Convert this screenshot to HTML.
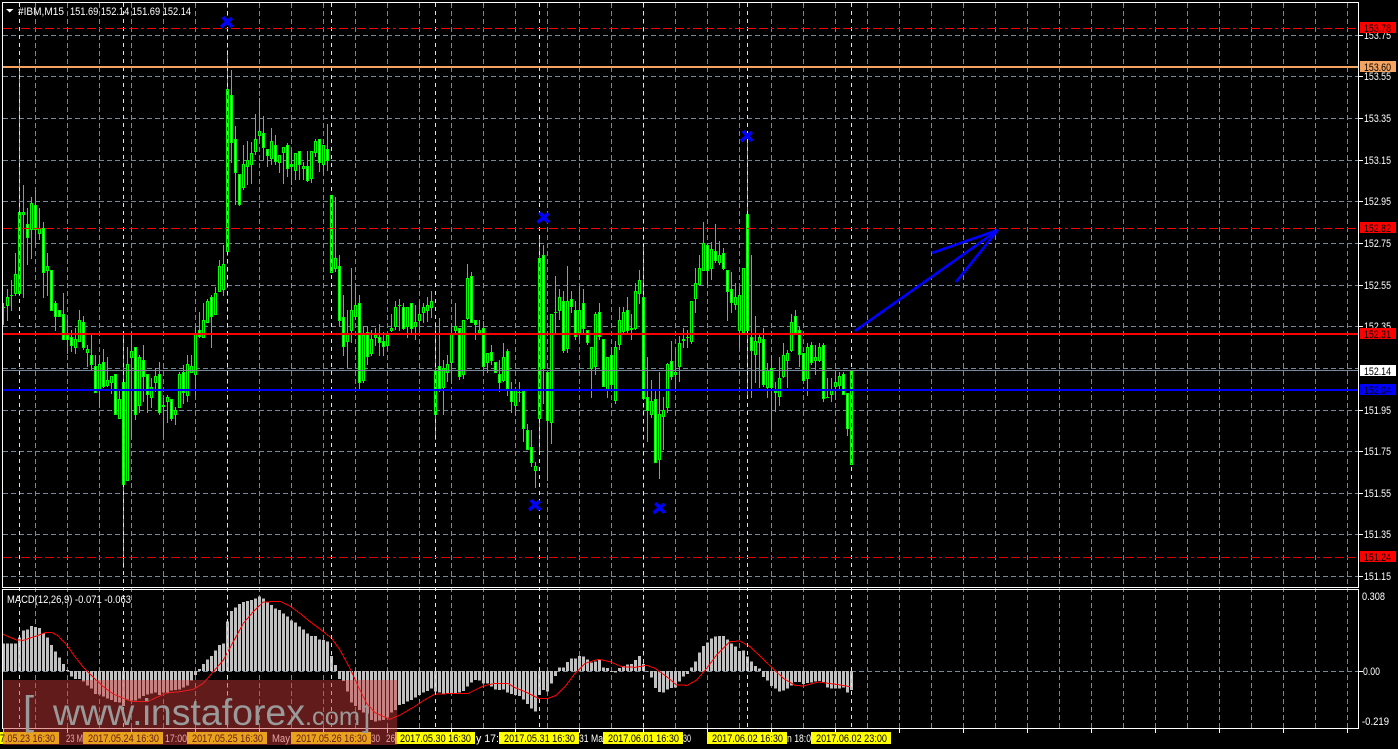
<!DOCTYPE html>
<html lang="en">
<head>
<meta charset="utf-8">
<title>#IBM,M15</title>
<style>
html,body{margin:0;padding:0;background:#000;width:1398px;height:749px;overflow:hidden}
svg{display:block;position:absolute;left:0;top:0}
text{font-family:"Liberation Sans",sans-serif;font-size:11px;fill:#fff}
.k{fill:#000}
</style>
</head>
<body>
<svg width="1398" height="749" viewBox="0 0 1398 749" xmlns="http://www.w3.org/2000/svg">
<rect width="1398" height="749" fill="#000"/>
<g shape-rendering="crispEdges" fill="none">
<!-- grid -->
<path stroke="#778899" stroke-dasharray="5 3" d="M35.5 3V728M67.5 3V728M99.5 3V728M131.5 3V728M163.5 3V728M195.5 3V728M227.5 3V728M259.5 3V728M291.5 3V728M323.5 3V728M355.5 3V728M387.5 3V728M419.5 3V728M451.5 3V728M483.5 3V728M515.5 3V728M547.5 3V728M579.5 3V728M611.5 3V728M643.5 3V728M675.5 3V728M707.5 3V728M739.5 3V728M771.5 3V728M803.5 3V728M835.5 3V728M867.5 3V728M899.5 3V728M931.5 3V728M963.5 3V728M995.5 3V728M1027.5 3V728M1059.5 3V728M1091.5 3V728M1123.5 3V728M1155.5 3V728M1187.5 3V728M1219.5 3V728M1251.5 3V728M1283.5 3V728M1315.5 3V728M1347.5 3V728"/>
<path stroke="#778899" stroke-dasharray="5 3" d="M3 35.5H1358M3 76.5H1358M3 118.5H1358M3 160.5H1358M3 201.5H1358M3 243.5H1358M3 285.5H1358M3 326.5H1358M3 368.5H1358M3 410.5H1358M3 451.5H1358M3 493.5H1358M3 534.5H1358M3 576.5H1358M3 671.5H1358"/>
<!-- MACD histogram -->
<path stroke="#c0c0c0" stroke-width="3" transform="translate(0,580) scale(1,.33333)" d="M3.5 273V190M7.5 273V190M11.5 273V190M15.5 273V190M19.5 273V172M23.5 273V152M27.5 273V148M31.5 273V138M35.5 273V141M39.5 273V144M43.5 273V160M47.5 273V172M51.5 273V195M55.5 273V214M59.5 273V232M63.5 273V252M67.5 273V270M71.5 273V289M75.5 273V297M79.5 273V297M83.5 273V305M87.5 273V316M91.5 273V326M95.5 273V342M99.5 273V344M103.5 273V350M107.5 273V355M111.5 273V360M115.5 273V366M119.5 273V368M123.5 273V378M127.5 273V358M131.5 273V362M135.5 273V362M139.5 273V355M143.5 273V348M147.5 273V344M151.5 273V340M155.5 273V338M159.5 273V345M163.5 273V338M167.5 273V340M171.5 273V332M175.5 273V330M179.5 273V328M183.5 273V322M187.5 273V316M191.5 273V302M195.5 273V285M199.5 273V267M203.5 273V252M207.5 273V238M211.5 273V228M215.5 273V212M219.5 273V195M223.5 273V190M227.5 273V125M231.5 273V93M235.5 273V82M239.5 273V72M243.5 273V66M247.5 273V63M251.5 273V60M255.5 273V55M259.5 273V50M263.5 273V55M267.5 273V68M271.5 273V75M275.5 273V85M279.5 273V90M283.5 273V100M287.5 273V110M291.5 273V122M295.5 273V128M299.5 273V140M303.5 273V148M307.5 273V160M311.5 273V168M315.5 273V168M319.5 273V178M323.5 273V180M327.5 273V185M331.5 273V228M335.5 273V255M339.5 273V297M343.5 273V303M347.5 273V335M351.5 273V368M355.5 273V378M359.5 273V390M363.5 273V398M367.5 273V400M371.5 273V420M375.5 273V424M379.5 273V422M383.5 273V420M387.5 273V412M391.5 273V398M395.5 273V390M399.5 273V375M403.5 273V372M407.5 273V365M411.5 273V360M415.5 273V352M419.5 273V345M423.5 273V338M427.5 273V333M431.5 273V325M435.5 273V335M439.5 273V338M443.5 273V340M447.5 273V342M451.5 273V340M455.5 273V340M459.5 273V338M463.5 273V333M467.5 273V320M471.5 273V308M475.5 273V300M479.5 273V302M483.5 273V310M487.5 273V310M491.5 273V320M495.5 273V328M499.5 273V330M503.5 273V328M507.5 273V338M511.5 273V342M515.5 273V345M519.5 273V348M523.5 273V358M527.5 273V372M531.5 273V385M535.5 273V395M539.5 273V345M543.5 273V330M547.5 273V335M551.5 273V310M555.5 273V288M559.5 273V262M563.5 273V262M567.5 273V246M571.5 273V235M575.5 273V236M579.5 273V228M583.5 273V230M587.5 273V238M591.5 273V248M595.5 273V244M599.5 273V240M603.5 273V262M607.5 273V264M611.5 273V276M615.5 273V278M619.5 273V264M623.5 273V258M627.5 273V254M631.5 273V252M635.5 273V240M639.5 273V228M643.5 273V252M647.5 273V275M651.5 273V293M655.5 273V324M659.5 273V336M663.5 273V338M667.5 273V328M671.5 273V324M675.5 273V322M679.5 273V305M683.5 273V290M687.5 273V282M691.5 273V262M695.5 273V245M699.5 273V218M703.5 273V198M707.5 273V188M711.5 273V175M715.5 273V170M719.5 273V168M723.5 273V168M727.5 273V178M731.5 273V190M735.5 273V200M739.5 273V213M743.5 273V212M747.5 273V230M751.5 273V245M755.5 273V258M759.5 273V266M763.5 273V291M767.5 273V302M771.5 273V318M775.5 273V325M779.5 273V335M783.5 273V332M787.5 273V326M791.5 273V316M795.5 273V306M799.5 273V306M803.5 273V312M807.5 273V309M811.5 273V307M815.5 273V305M819.5 273V303M823.5 273V306M827.5 273V322M831.5 273V326M835.5 273V326M839.5 273V326M843.5 273V322M847.5 273V338M851.5 273V330"/>
</g>
<!-- MACD signal -->
<g fill="none" stroke="#ff0000" stroke-width="3" shape-rendering="crispEdges">
<polyline transform="translate(0,580) scale(.33333)" points="8,162 30,172 50,180 70,181 90,174 110,168 135,158 155,157 175,168 200,195 225,230 250,262 280,292 310,320 340,342 370,355 395,364 445,364 470,352 500,339 540,335 580,328 610,310 640,275 670,240 700,185 730,130 760,95 790,66 840,64 870,78 900,100 930,125 970,155 995,175 1020,210 1050,265 1075,320 1100,370 1125,398 1170,418 1200,405 1240,382 1270,362 1305,342 1350,341"/>
<polyline transform="translate(450,580) scale(.33333)" points="0,341 55,340 75,330 100,318 130,311 175,311 195,323 225,335 265,355 295,355 320,345 345,320 375,280 405,250 445,238 480,245 515,260 555,262 590,256 615,265 650,290 680,315 712,316 740,300 770,265 800,225 840,185 870,183 900,200 930,228 965,262 1000,295 1035,316 1060,318 1105,306 1135,310 1165,314 1200,320"/>
</g>
<g shape-rendering="crispEdges" fill="none">
<!-- wicks -->
<path stroke="#00ff00" d="M3.5 303V325M7.5 289V321M11.5 280V311M15.5 253V296M19.5 60V296M23.5 185V298M27.5 208V265M31.5 197V259M35.5 190V246M39.5 208V240M43.5 222V298M47.5 253V296M51.5 270V311M55.5 301V331M59.5 310V317M63.5 293V340M67.5 320V354M71.5 330V352M75.5 328V354M79.5 310V342M83.5 316V350M87.5 345V367M91.5 335V370M95.5 355V393M99.5 355V408M103.5 349V388M107.5 357V387M111.5 376V394M115.5 374V415M119.5 390V419M123.5 333V568M127.5 347V481M131.5 332V438M135.5 347V420M139.5 355V413M143.5 345V402M147.5 374V413M151.5 378V408M155.5 368V392M159.5 362V415M163.5 398V438M167.5 395V423M171.5 399V421M175.5 407V425M179.5 372V408M183.5 365V404M187.5 355V402M191.5 355V373M195.5 326V396M199.5 312V338M203.5 303V338M207.5 299V323M211.5 295V348M215.5 287V315M219.5 260V292M223.5 245V296M227.5 50V252M231.5 70V163M235.5 126V205M239.5 174V206M243.5 145V190M247.5 141V185M251.5 142V184M255.5 114V155M259.5 98V140M263.5 116V160M267.5 149V167M271.5 128V165M275.5 135V165M279.5 155V173M283.5 147V184M287.5 143V177M291.5 150V185M295.5 153V180M299.5 151V180M303.5 162V180M307.5 151V182M311.5 151V183M315.5 139V157M319.5 139V172M323.5 145V174M327.5 124V171M331.5 195V273M335.5 197V272M339.5 255V327M343.5 295V356M347.5 310V368M351.5 268V343M355.5 285V320M359.5 295V389M363.5 326V383M367.5 326V365M371.5 330V356M375.5 328V346M379.5 324V356M383.5 332V356M387.5 335V350M391.5 314V332M395.5 301V330M399.5 299V331M403.5 303V330M407.5 307V338M411.5 303V333M415.5 305V340M419.5 301V334M423.5 303V323M427.5 297V322M431.5 291V318M435.5 322V440M439.5 318V392M443.5 360V415M447.5 355V382M451.5 324V383M455.5 303V333M459.5 328V380M463.5 320V379M467.5 264V320M471.5 272V323M475.5 320V340M479.5 320V335M483.5 321V371M487.5 353V373M491.5 345V365M495.5 362V373M499.5 360V392M503.5 343V382M507.5 349V396M511.5 382V413M515.5 390V416M519.5 382V402M523.5 391V442M527.5 424V450M531.5 430V467M535.5 462V488M539.5 237V453M543.5 245V404M547.5 372V481M551.5 314V444M555.5 276V335M559.5 289V320M563.5 291V353M567.5 266V353M571.5 291V313M575.5 301V340M579.5 286V340M583.5 289V333M587.5 330V345M591.5 347V398M595.5 312V375M599.5 303V340M603.5 339V387M607.5 357V398M611.5 347V390M615.5 341V404M619.5 307V350M623.5 307V335M627.5 297V335M631.5 314V340M635.5 283V330M639.5 270V304M643.5 248V400M647.5 357V442M651.5 380V418M655.5 390V463M659.5 372V479M663.5 397V450M667.5 363V413M671.5 341V380M675.5 349V390M679.5 336V382M683.5 328V348M687.5 330V348M691.5 301V344M695.5 268V313M699.5 255V286M703.5 222V271M707.5 243V286M711.5 242V280M715.5 224V263M719.5 241V265M723.5 248V270M727.5 270V321M731.5 272V313M735.5 283V310M739.5 287V348M743.5 268V335M747.5 140V395M751.5 255V398M755.5 316V383M759.5 334V388M763.5 328V387M767.5 363V398M771.5 355V430M775.5 382V412M779.5 357V406M783.5 343V378M787.5 350V388M791.5 314V352M795.5 310V334M799.5 327V367M803.5 353V382M807.5 343V396M811.5 342V365M815.5 345V375M819.5 343V362M823.5 343V402M827.5 378V398M831.5 378V402M835.5 371V400M839.5 372V390M843.5 372V395M847.5 393V436M851.5 370V465"/>
<!-- bodies -->
<path stroke="#00ff00" stroke-width="3" d="M3.5 307V308M7.5 297V306M11.5 295V296M15.5 274V294M19.5 212V294M23.5 212V215M27.5 224V238M31.5 203V230M35.5 205V230M39.5 228V234M43.5 228V273M47.5 266V271M51.5 270V311M55.5 303V317M59.5 310V317M63.5 314V340M67.5 335V340M71.5 337V346M75.5 339V348M79.5 320V342M83.5 322V348M87.5 349V353M91.5 355V365M95.5 366V393M99.5 364V391M103.5 362V387M107.5 380V386M111.5 376V383M115.5 374V415M119.5 399V419M123.5 382V485M127.5 364V481M131.5 351V358M135.5 347V415M139.5 357V406M143.5 360V377M147.5 374V395M151.5 387V398M155.5 376V383M159.5 374V413M163.5 405V407M167.5 397V402M171.5 399V419M175.5 410V415M179.5 374V408M183.5 372V393M187.5 364V396M191.5 366V373M195.5 333V375M199.5 330V337M203.5 320V338M207.5 301V323M211.5 297V317M215.5 293V315M219.5 266V292M223.5 264V290M227.5 89V252M231.5 95V143M235.5 139V173M239.5 174V205M243.5 164V188M247.5 160V167M251.5 153V165M255.5 139V152M259.5 131V136M263.5 133V148M267.5 149V156M271.5 141V159M275.5 145V162M279.5 155V163M283.5 147V153M287.5 145V169M291.5 164V167M295.5 153V171M299.5 151V165M303.5 166V169M307.5 166V181M311.5 151V179M315.5 141V153M319.5 139V163M323.5 145V165M327.5 149V161M331.5 195V273M335.5 258V269M339.5 266V321M343.5 317V347M347.5 333V342M351.5 310V331M355.5 305V317M359.5 303V383M363.5 335V381M367.5 332V357M371.5 339V354M375.5 335V338M379.5 337V343M383.5 341V347M387.5 335V346M391.5 328V331M395.5 307V327M399.5 305V306M403.5 307V329M407.5 307V327M411.5 303V329M415.5 322V327M419.5 314V321M423.5 307V313M427.5 305V311M431.5 301V308M435.5 371V415M439.5 366V389M443.5 368V388M447.5 364V373M451.5 333V363M455.5 326V331M459.5 328V377M463.5 320V375M467.5 278V319M471.5 276V323M475.5 320V325M479.5 330V333M483.5 328V367M487.5 353V363M491.5 352V361M495.5 362V373M499.5 374V383M503.5 357V381M507.5 351V389M511.5 390V402M515.5 390V406M519.5 392V393M523.5 391V429M527.5 430V450M531.5 447V463M535.5 466V471M539.5 258V419M543.5 255V369M547.5 372V421M551.5 314V423M555.5 312V313M559.5 297V311M563.5 301V351M567.5 301V349M571.5 299V307M575.5 310V337M579.5 310V333M583.5 303V329M587.5 330V343M591.5 347V369M595.5 314V367M599.5 312V337M603.5 339V387M607.5 357V391M611.5 355V385M615.5 347V401M619.5 320V345M623.5 312V332M627.5 310V331M631.5 328V330M635.5 291V329M639.5 280V294M643.5 297V399M647.5 397V411M651.5 401V415M655.5 399V463M659.5 414V460M663.5 410V417M667.5 364V408M671.5 361V377M675.5 372V375M679.5 343V367M683.5 339V341M687.5 337V338M691.5 301V342M695.5 283V299M699.5 268V285M703.5 243V271M707.5 245V271M711.5 249V269M715.5 251V261M719.5 255V263M723.5 253V269M727.5 270V292M731.5 289V303M735.5 297V305M739.5 295V331M743.5 268V333M747.5 214V331M751.5 337V351M755.5 341V355M759.5 337V343M763.5 339V385M767.5 370V388M771.5 368V388M775.5 391V393M779.5 378V397M783.5 355V377M787.5 353V361M791.5 322V351M795.5 316V333M799.5 330V355M803.5 353V381M807.5 347V379M811.5 345V363M815.5 357V361M819.5 347V361M823.5 345V399M827.5 397V398M831.5 390V395M835.5 382V387M839.5 376V386M843.5 374V395M847.5 393V429M851.5 370V465"/>
<!-- white centres -->
<path stroke="#ffffff" d="M27.5 225V237M35.5 206V229M43.5 229V272M51.5 271V310M55.5 304V316M59.5 311V316M63.5 315V339M67.5 336V339M71.5 338V345M83.5 323V347M91.5 356V364M95.5 367V392M103.5 363V386M115.5 375V414M123.5 383V484M135.5 348V414M143.5 361V376M147.5 375V394M159.5 375V412M171.5 400V418M183.5 373V392M199.5 331V336M211.5 298V316M231.5 96V142M235.5 140V172M239.5 175V204M263.5 134V147M267.5 150V155M275.5 146V161M287.5 146V168M299.5 152V164M307.5 167V180M319.5 140V162M327.5 150V160M339.5 267V320M343.5 318V346M359.5 304V382M367.5 333V356M379.5 338V342M383.5 342V346M403.5 308V328M411.5 304V328M439.5 367V388M459.5 329V376M471.5 277V322M475.5 321V324M483.5 329V366M491.5 353V360M495.5 363V372M499.5 375V382M507.5 352V388M511.5 391V401M523.5 392V428M527.5 431V449M531.5 448V462M543.5 256V368M547.5 373V420M563.5 302V350M571.5 300V306M575.5 311V336M583.5 304V328M587.5 331V342M599.5 313V336M603.5 340V386M611.5 356V384M627.5 311V330M643.5 298V398M647.5 398V410M655.5 400V462M671.5 362V376M707.5 246V270M715.5 252V260M723.5 254V268M727.5 271V291M731.5 290V302M747.5 215V330M751.5 338V350M763.5 340V384M771.5 369V387M795.5 317V332M799.5 331V354M803.5 354V380M811.5 346V362M823.5 346V398M843.5 375V394M847.5 394V428"/>
<!-- hollow centres -->
<path stroke="#000000" d="M7.5 298V305M15.5 275V293M19.5 213V293M23.5 213V214M31.5 204V229M39.5 229V233M47.5 267V270M75.5 340V347M79.5 321V341M87.5 350V352M99.5 365V390M107.5 381V385M111.5 377V382M119.5 400V418M127.5 365V480M131.5 352V357M139.5 358V405M151.5 388V397M155.5 377V382M167.5 398V401M175.5 411V414M179.5 375V407M187.5 365V395M191.5 367V372M195.5 334V374M203.5 321V337M207.5 302V322M215.5 294V314M219.5 267V291M223.5 265V289M227.5 90V251M243.5 165V187M247.5 161V166M251.5 154V164M255.5 140V151M259.5 132V135M271.5 142V158M279.5 156V162M283.5 148V152M295.5 154V170M303.5 167V168M311.5 152V178M315.5 142V152M323.5 146V164M331.5 196V272M335.5 259V268M347.5 334V341M351.5 311V330M355.5 306V316M363.5 336V380M371.5 340V353M375.5 336V337M387.5 336V345M391.5 329V330M395.5 308V326M407.5 308V326M415.5 323V326M419.5 315V320M423.5 308V312M427.5 306V310M431.5 302V307M435.5 372V414M443.5 369V387M447.5 365V372M451.5 334V362M455.5 327V330M463.5 321V374M467.5 279V318M479.5 331V332M487.5 354V362M503.5 358V380M515.5 391V405M535.5 467V470M539.5 259V418M551.5 315V422M559.5 298V310M567.5 302V348M579.5 311V332M591.5 348V368M595.5 315V366M607.5 358V390M615.5 348V400M619.5 321V344M623.5 313V331M635.5 292V328M639.5 281V293M651.5 402V414M659.5 415V459M663.5 411V416M667.5 365V407M675.5 373V374M679.5 344V366M691.5 302V341M695.5 284V298M699.5 269V284M703.5 244V270M711.5 250V268M719.5 256V262M735.5 298V304M739.5 296V330M743.5 269V332M755.5 342V354M759.5 338V342M767.5 371V387M779.5 379V396M783.5 356V376M787.5 354V360M791.5 323V350M807.5 348V378M815.5 358V360M819.5 348V360M831.5 391V394M835.5 383V386M839.5 377V385M851.5 371V464"/>
<!-- yellow period separators -->
<path stroke="#ffff00" stroke-dasharray="4 4" d="M19.5 3V728M123.5 3V728M227.5 3V728M331.5 3V728M435.5 3V728M539.5 3V728M643.5 3V728M747.5 3V728M851.5 3V728"/>
<!-- horizontal levels -->
<path stroke="#ff0000" stroke-dasharray="9 3 3 3 9 3 9 3" d="M3 28.5H1358M3 228.5H1358"/>
<path stroke="#e00000" stroke-dasharray="9 3 3 3 9 3 9 3" d="M3 557.5H1358"/>
<path stroke="#f4a460" stroke-width="2" d="M3 67H1358"/>
<path stroke="#ff0000" stroke-width="2" d="M3 334H1358"/>
<path stroke="#778899" d="M3 370.5H1358"/>
<path stroke="#0000ff" stroke-width="2" d="M3 390H1358"/>
</g>
<!-- arrow -->
<g fill="none" stroke="#0000ff" stroke-width="2.6" shape-rendering="crispEdges">
<path d="M855 331L998 230M932 253L998 230M956 282L998 230"/>
</g>
<!-- crosses -->
<g fill="none" stroke="#0000ff" stroke-width="3.5" shape-rendering="crispEdges">
<path d="M221 27L232 18M223 17L232 27"/>
<path d="M537.5 222.5L548.5 213.5M539.5 212.5L548.5 222.5"/>
<path d="M529 510L540 501M531 500L540 510"/>
<path d="M653.5 513L664.5 504M655.5 503L664.5 513"/>
<path d="M741 141L752 132M743 131L752 141"/>
</g>
<!-- frame -->
<g fill="none" stroke="#fff" shape-rendering="crispEdges">
<path d="M2.5 2.5H1358.5V587.5H2.5Z"/>
<path d="M2.5 589.5H1358.5V728.5H2.5Z"/>
<path d="M1359 35.5h4M1359 76.5h4M1359 118.5h4M1359 160.5h4M1359 201.5h4M1359 243.5h4M1359 285.5h4M1359 326.5h4M1359 410.5h4M1359 451.5h4M1359 493.5h4M1359 534.5h4M1359 576.5h4M1359 671.5h4"/>
<path d="M3.5 729v4M67.5 729v4M131.5 729v4M195.5 729v4M259.5 729v4M323.5 729v4M387.5 729v4M451.5 729v4M515.5 729v4M579.5 729v4M643.5 729v4M707.5 729v4M771.5 729v4M835.5 729v4M899.5 729v4M963.5 729v4M1027.5 729v4M1091.5 729v4M1155.5 729v4M1219.5 729v4M1283.5 729v4M1347.5 729v4"/>
</g>
<!-- title -->
<path d="M6 9H13.5L9.7 12.5Z" fill="#fff"/>
<text x="18" y="15" textLength="46" lengthAdjust="spacingAndGlyphs">#IBM,M15</text>
<text x="70" y="15" textLength="121" lengthAdjust="spacingAndGlyphs">151.69 152.14 151.69 152.14</text>
<text x="7" y="603" textLength="124" lengthAdjust="spacingAndGlyphs">MACD(12,26,9) -0.071 -0.063</text>
<!-- right axis -->
<g>
<text x="1364" y="39" textLength="27" lengthAdjust="spacingAndGlyphs">153.75</text>
<text x="1364" y="80" textLength="27" lengthAdjust="spacingAndGlyphs">153.55</text>
<text x="1364" y="122" textLength="27" lengthAdjust="spacingAndGlyphs">153.35</text>
<text x="1364" y="164" textLength="27" lengthAdjust="spacingAndGlyphs">153.15</text>
<text x="1364" y="205" textLength="27" lengthAdjust="spacingAndGlyphs">152.95</text>
<text x="1364" y="247" textLength="27" lengthAdjust="spacingAndGlyphs">152.75</text>
<text x="1364" y="289" textLength="27" lengthAdjust="spacingAndGlyphs">152.55</text>
<text x="1364" y="330" textLength="27" lengthAdjust="spacingAndGlyphs">152.35</text>
<text x="1364" y="414" textLength="27" lengthAdjust="spacingAndGlyphs">151.95</text>
<text x="1364" y="455" textLength="27" lengthAdjust="spacingAndGlyphs">151.75</text>
<text x="1364" y="497" textLength="27" lengthAdjust="spacingAndGlyphs">151.55</text>
<text x="1364" y="538" textLength="27" lengthAdjust="spacingAndGlyphs">151.35</text>
<text x="1364" y="580" textLength="27" lengthAdjust="spacingAndGlyphs">151.15</text>
<text x="1362" y="600" textLength="23" lengthAdjust="spacingAndGlyphs">0.308</text>
<text x="1363" y="675" textLength="17" lengthAdjust="spacingAndGlyphs">0.00</text>
<text x="1362" y="725" textLength="27" lengthAdjust="spacingAndGlyphs">-0.219</text>
</g>
<!-- price labels -->
<g shape-rendering="crispEdges">
<rect x="1360" y="22" width="36" height="11" fill="#ff0000"/>
<rect x="1360" y="61" width="36" height="11" fill="#f4a460"/>
<rect x="1360" y="222" width="36" height="11" fill="#ff0000"/>
<rect x="1360" y="328" width="36" height="11" fill="#ff0000"/>
<rect x="1360" y="365" width="36" height="11" fill="#ffffff"/>
<rect x="1360" y="384" width="36" height="11" fill="#0000ff"/>
<rect x="1360" y="551" width="36" height="11" fill="#ff0000"/>
</g>
<g>
<text class="k" x="1364" y="32" textLength="27" lengthAdjust="spacingAndGlyphs">153.78</text>
<text class="k" x="1364" y="71" textLength="27" lengthAdjust="spacingAndGlyphs">153.60</text>
<text class="k" x="1364" y="232" textLength="27" lengthAdjust="spacingAndGlyphs">152.82</text>
<text class="k" x="1364" y="338" textLength="27" lengthAdjust="spacingAndGlyphs">152.31</text>
<text class="k" x="1364" y="375" textLength="27" lengthAdjust="spacingAndGlyphs">152.14</text>
<text class="k" x="1364" y="394" textLength="27" lengthAdjust="spacingAndGlyphs">152.04</text>
<text class="k" x="1364" y="561" textLength="27" lengthAdjust="spacingAndGlyphs">151.24</text>
</g>
<!-- time axis -->
<g>
<text x="66" y="742" textLength="17" lengthAdjust="spacingAndGlyphs">23 M</text>
<text x="165" y="742" textLength="22" lengthAdjust="spacingAndGlyphs">17:00</text>
<text x="272" y="742" textLength="18" lengthAdjust="spacingAndGlyphs">May</text>
<text x="371" y="742" textLength="9" lengthAdjust="spacingAndGlyphs">30</text>
<text x="386" y="742" textLength="9" lengthAdjust="spacingAndGlyphs">26</text>
<text x="476" y="742" textLength="23" lengthAdjust="spacingAndGlyphs">y 17:</text>
<text x="579" y="742" textLength="24" lengthAdjust="spacingAndGlyphs">31 Ma</text>
<text x="683" y="742" textLength="8" lengthAdjust="spacingAndGlyphs">30</text>
<text x="787" y="742" textLength="24" lengthAdjust="spacingAndGlyphs">n 18:0</text>
</g>
<g fill="#ffff00" shape-rendering="crispEdges">
<rect x="0" y="732" width="59" height="12"/>
<rect x="83" y="732" width="80" height="12"/>
<rect x="187" y="732" width="80" height="12"/>
<rect x="291" y="732" width="80" height="12"/>
<rect x="395" y="732" width="80" height="12"/>
<rect x="499" y="732" width="80" height="12"/>
<rect x="603" y="732" width="80" height="12"/>
<rect x="707" y="732" width="80" height="12"/>
<rect x="811" y="732" width="80" height="12"/>
</g>
<g>
<text class="k" x="0" y="742" textLength="55" lengthAdjust="spacingAndGlyphs">7.05.23 16:30</text>
<text class="k" x="88" y="742" textLength="71" lengthAdjust="spacingAndGlyphs">2017.05.24 16:30</text>
<text class="k" x="192" y="742" textLength="71" lengthAdjust="spacingAndGlyphs">2017.05.25 16:30</text>
<text class="k" x="296" y="742" textLength="71" lengthAdjust="spacingAndGlyphs">2017.05.26 16:30</text>
<text class="k" x="400" y="742" textLength="71" lengthAdjust="spacingAndGlyphs">2017.05.30 16:30</text>
<text class="k" x="504" y="742" textLength="71" lengthAdjust="spacingAndGlyphs">2017.05.31 16:30</text>
<text class="k" x="608" y="742" textLength="71" lengthAdjust="spacingAndGlyphs">2017.06.01 16:30</text>
<text class="k" x="712" y="742" textLength="71" lengthAdjust="spacingAndGlyphs">2017.06.02 16:30</text>
<text class="k" x="816" y="742" textLength="71" lengthAdjust="spacingAndGlyphs">2017.06.02 23:00</text>
</g>
<!-- watermark -->
<rect x="3" y="680" width="394" height="65" fill="rgb(208,57,57)" fill-opacity=".47" shape-rendering="crispEdges"/>
<g style="fill:#9a9a9a">
<text x="23" y="724" style="font-size:40px;fill:#9a9a9a">[</text>
<text x="53" y="725" textLength="252" lengthAdjust="spacingAndGlyphs" style="font-size:37px;fill:#9a9a9a">www.instaforex</text>
<text x="305" y="725" textLength="55" lengthAdjust="spacingAndGlyphs" style="font-size:25px;fill:#9a9a9a">.com</text>
<text x="362" y="727" style="font-size:30px;fill:#9a9a9a">]</text>
</g>
</svg>
</body>
</html>
